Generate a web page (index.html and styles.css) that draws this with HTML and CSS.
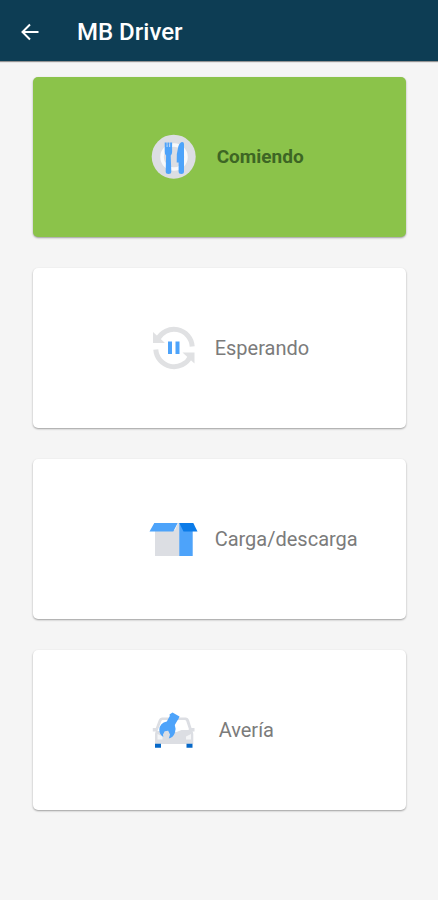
FILE: index.html
```html
<!DOCTYPE html>
<html lang="es">
<head>
<meta charset="utf-8">
<meta name="viewport" content="width=device-width, initial-scale=1">
<title>MB Driver</title>
<link rel="stylesheet" href="styles.css">
</head>
<body>
<header class="app-bar">
  <button class="back" type="button" aria-label="Atrás">
    <svg width="20" height="20" viewBox="0 0 20 20" fill="none" stroke="currentColor" stroke-width="2"><path d="M18.500 10H3M10 2.500 2.500 10l7.500 7.500"/></svg>
  </button>
  <h1 class="title">MB Driver</h1>
</header>
<main class="options">
  <button class="card card-active" type="button" aria-pressed="true">
    <svg width="52" height="50" viewBox="0 0 52 50" aria-hidden="true">
      <circle cx="24.700" cy="24.700" r="22" fill="#dcdee3"/>
      <circle cx="25" cy="25" r="12" fill="none" stroke="#f8f9fb" stroke-width="3.500"/>
      <path fill="#4da3fa" d="M15.700 10.500h2v4.500h.7v-4.500h2v4.500h.7v-4.500h2V20q0 2.500-1.400 3.500l.6 16q0 2.500-2.800 2.500t-2.800-2.500l.4-16Q15.700 22.500 15.700 20zM35 12v27.500q0 2.500-2.700 2.500t-2.700-2.500V30.500H27.700q-.5-9 1.600-16 1.500-4.500 4-4.500 1.700 0 1.700 2z"/>
    </svg>
    <span>Comiendo</span>
  </button>
  <button class="card" type="button" aria-pressed="false">
    <svg width="50" height="50" viewBox="0 0 50 50" aria-hidden="true">
      <g fill="none" stroke="#e0e1e3" stroke-width="5"><path d="M8.500 16.500A18.300 18.300 0 0 1 43.200 23.500M6.800 26.500A18.300 18.300 0 0 0 41.500 33.500"/></g>
      <path fill="#e0e1e3" d="M4 9v11h12zM45.500 40.500v-11h-12z"/>
      <path fill="#4da3fa" d="M19 18.500h4V31h-4zM26.500 18.500h4V31h-4z"/>
    </svg>
    <span>Esperando</span>
  </button>
  <button class="card" type="button" aria-pressed="false">
    <svg width="50" height="50" viewBox="0 0 50 50" aria-hidden="true">
      <path fill="#dcdee3" d="M6 16h20l3-7h2v33H6z"/>
      <path fill="#4da3fa" d="M30.300 9H36v8h7.700v25H30.300zM5.300 9h23.400l-4.400 8.500H.5z"/>
      <path fill="#0b7be8" d="M30.300 9h14l4.200 8.500H34.500z"/>
    </svg>
    <span>Carga/descarga</span>
  </button>
  <button class="card" type="button" aria-pressed="false">
    <svg width="54" height="50" viewBox="0 0 54 50" aria-hidden="true">
      <path fill="#dcdee3" fill-rule="evenodd" d="M13 12.500h24q2.200 0 3 2.500l2.500 8h3v3.500h-2q.8 1 .8 3V39H6V29.500q0-2 .8-3h-3V23h3l3-8q.8-2.500 3.200-2.500zm.8 2.500q-1 0-1.400 1L8.500 26h12l7 1 5-2h6.500q1.200 0 .8-1.300L37.200 16q-.4-1-1.400-1z"/>
      <path fill="#f4f5f7" d="M8.500 29l5 2.500v3h-5zM42 29l-5 2.500v3h5z"/>
      <path fill="#0668c8" d="M6 38.700h6v4H6zM37.500 38.700h6v4h-6z"/>
      <path fill="#4da3fa" d="M23.500 7.500l7 4-1.300 3-.8 1-2.600 4.500q1.600 4 0 8-1.700 4.500-6 5.500l1.200-4-1.800-3.700-3.500.4-1.700 3.300.3 2.500q-4-2.500-4-7.500.5-6.500 7.500-8l3-5.500-.3-1.500z"/>
    </svg>
    <span>Avería</span>
  </button>
</main>
</body>
</html>
```
FILE: styles.css
```css
* {
  box-sizing: border-box;
}

body {
  margin: 0;
  min-height: 100vh;
  background: #f5f5f5;
  font-family: Roboto, "Liberation Sans", sans-serif;
}

.app-bar {
  display: flex;
  align-items: center;
  gap: 37px;
  height: 61px;
  padding: 3px 20px 0;
  background: #0d3d54;
  color: #fff;
  box-shadow: 0 1px 1px rgba(0, 0, 0, 0.4);
}

.back {
  display: flex;
  padding: 0;
  border: 0;
  background: none;
  color: inherit;
}

.title {
  margin: 0;
  font-size: 24px;
  line-height: 28px;
  font-weight: 500;
}

.options {
  display: grid;
  gap: 31px;
  padding: 16px 32px 32px 33px;
}

.card {
  display: flex;
  align-items: center;
  gap: 16px;
  height: 160px;
  padding: 0 16px 0 31%;
  border: 0;
  border-radius: 5px;
  background: #fff;
  color: #7b7b7b;
  font: 400 20px/24px Roboto, "Liberation Sans", sans-serif;
  text-align: left;
  box-shadow: 0 1px 2px rgba(0, 0, 0, 0.36);
}

.card svg {
  flex: none;
}

.card-active {
  background: #8bc34a;
  color: #3d6624;
  font-weight: 700;
  font-size: 19px;
}
```
